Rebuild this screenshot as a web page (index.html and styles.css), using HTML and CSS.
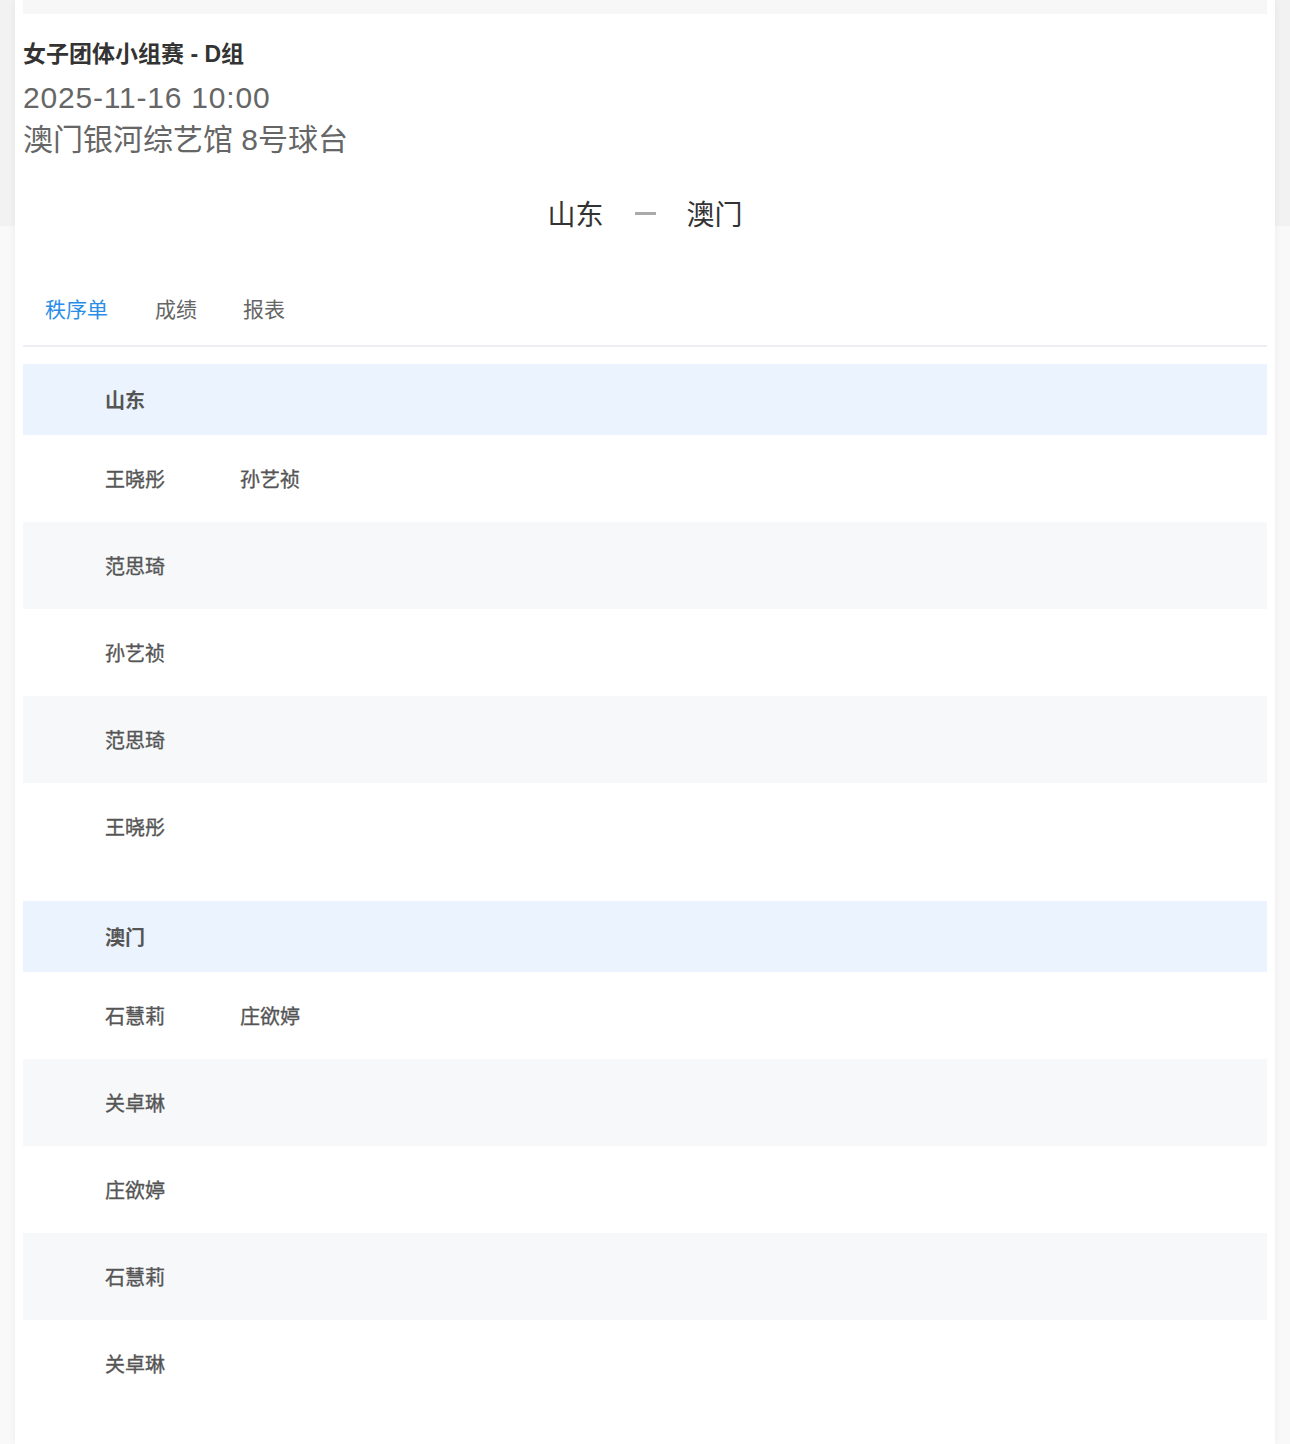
FILE: index.html
```html
<!DOCTYPE html>
<html lang="zh-CN">
<head>
    <meta charset="UTF-8">
    <meta name="viewport" content="width=device-width, initial-scale=1.0">
    <title>女子团体小组赛 - D组</title>
    <link rel="stylesheet" href="styles.css">
</head>
<body>

<div class="card">
    <div class="top-bar"></div>

    <div class="match-info">
        <div class="match-title">女子团体小组赛 - D组</div>
        <div class="match-time">2025-11-16 10:00</div>
        <div class="match-place">澳门银河综艺馆 8号球台</div>
    </div>

    <div class="versus">
        <span class="team">山东</span>
        <span class="dash"></span>
        <span class="team">澳门</span>
    </div>

    <div class="tabs">
        <div class="tab active">秩序单</div>
        <div class="tab">成绩</div>
        <div class="tab">报表</div>
    </div>

    <table class="order">
        <tr class="team-row"><td class="idx"></td><td class="name" colspan="3">山东</td></tr>
        <tr><td class="idx"></td><td class="name">王晓彤</td><td class="name">孙艺祯</td><td></td></tr>
        <tr class="alt"><td class="idx"></td><td class="name">范思琦</td><td class="name"></td><td></td></tr>
        <tr><td class="idx"></td><td class="name">孙艺祯</td><td class="name"></td><td></td></tr>
        <tr class="alt"><td class="idx"></td><td class="name">范思琦</td><td class="name"></td><td></td></tr>
        <tr><td class="idx"></td><td class="name">王晓彤</td><td class="name"></td><td></td></tr>
    </table>

    <table class="order">
        <tr class="team-row"><td class="idx"></td><td class="name" colspan="3">澳门</td></tr>
        <tr><td class="idx"></td><td class="name">石慧莉</td><td class="name">庄欲婷</td><td></td></tr>
        <tr class="alt"><td class="idx"></td><td class="name">关卓琳</td><td class="name"></td><td></td></tr>
        <tr><td class="idx"></td><td class="name">庄欲婷</td><td class="name"></td><td></td></tr>
        <tr class="alt"><td class="idx"></td><td class="name">石慧莉</td><td class="name"></td><td></td></tr>
        <tr><td class="idx"></td><td class="name">关卓琳</td><td class="name"></td><td></td></tr>
    </table>
</div>

</body>
</html>
```

FILE: styles.css
```css
body {
    margin: 0;
    font-family: "Liberation Sans", "Noto Sans CJK SC", sans-serif;
    background: linear-gradient(#f2f2f2 0, #f2f2f2 226px, #f9f9f9 226px);
    min-height: 1444px;
}
.card {
    margin: 0 15px;
    padding: 0 8px 37px;
    background-color: white;
    box-shadow: 0 0 8px rgba(0, 0, 0, 0.06);
    min-height: 1407px;
}
.top-bar {
    height: 14px;
    background-color: #f7f7f7;
}
.match-info {
    padding-top: 26px;
}
.match-title {
    font-size: 23px;
    line-height: 28px;
    font-weight: bold;
    color: #333;
}
.match-time,
.match-place {
    font-size: 30px;
    line-height: 42px;
    color: #666;
}
.match-time {
    margin-top: 9px;
    letter-spacing: 0.8px;
}
.versus {
    margin-top: 34px;
    display: flex;
    justify-content: center;
    align-items: center;
    gap: 31px;
    font-family: "Noto Sans CJK SC", sans-serif;
    font-size: 28px;
    line-height: 36px;
    color: #333;
}
.dash {
    width: 21px;
    height: 3px;
    background-color: #aaa;
}
.tabs {
    margin-top: 40px;
    display: flex;
    border-bottom: 2px solid #eceef3;
}
.tab {
    padding: 0 23px 0 22px;
    font-family: "Noto Sans CJK SC", sans-serif;
    font-size: 21px;
    line-height: 74px;
    color: #666;
}
.tab + .tab {
    padding-left: 24px;
}
.tab:last-child {
    padding-left: 23px;
}
.tab.active {
    color: #2a8ee8;
}
.order {
    width: 100%;
    border-collapse: collapse;
    font-family: "Noto Sans CJK SC", sans-serif;
    font-size: 20px;
    color: #555;
}
.order:first-of-type {
    margin-top: 17px;
}
.order + .order {
    margin-top: 31px;
}
.order td {
    height: 87px;
    padding: 0;
    -webkit-text-stroke: 0.35px #555;
}
.order .idx {
    width: 82px;
}
.order .name {
    width: 135px;
}
.order .alt {
    background-color: #f7f8fa;
}
.order .team-row {
    background-color: #ebf3fe;
}
.order .team-row td {
    height: 71px;
    font-weight: bold;
    -webkit-text-stroke: 0;
}
```
